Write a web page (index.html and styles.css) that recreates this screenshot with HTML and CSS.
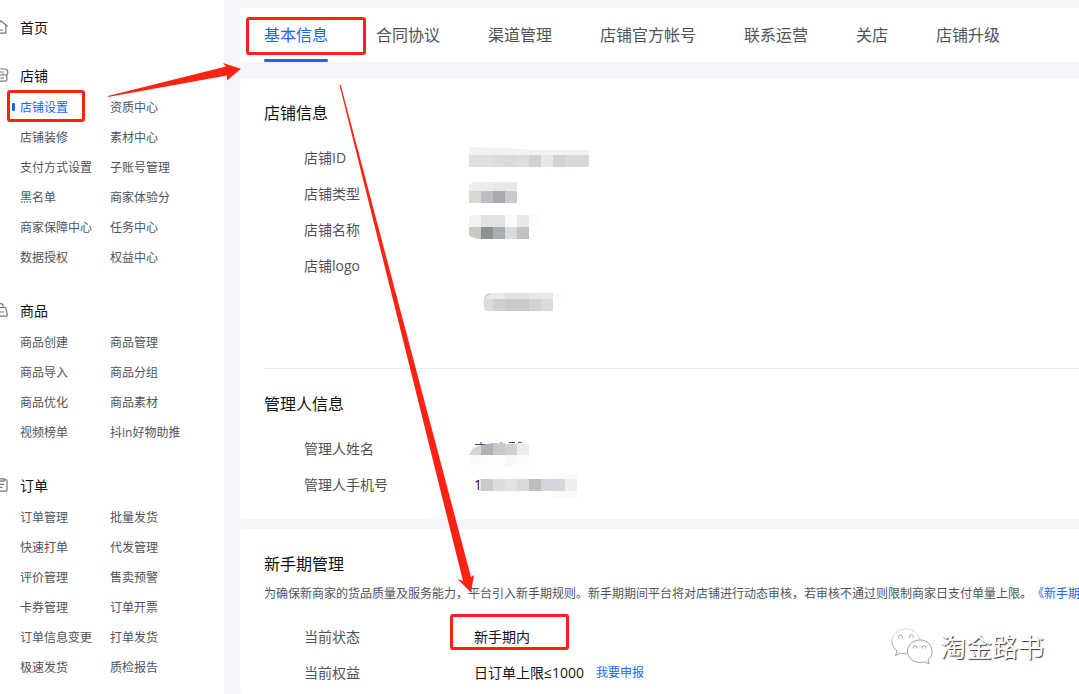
FILE: index.html
```
<!DOCTYPE html>
<html lang="zh-CN">
<head>
<meta charset="utf-8">
<meta name="viewport" content="width=device-width, initial-scale=1">
<title>店铺设置</title>
<link rel="stylesheet" href="styles.css">
</head>
<body>
<div class="app">
  <nav class="sidebar">
    <section class="group">
      <h2 class="group-title"><svg class="group-icon" viewBox="0 0 16 16"><path d="M1.5 7.5 8 1.800l6.500 5.700M3.200 6.500v7.700h9.600V6.500M6 11h4"/></svg><a href="#">首页</a></h2>
    </section>
    <section class="group">
      <h2 class="group-title"><svg class="group-icon" viewBox="0 0 16 16"><path d="M3 2h9c2 0 2.800 2 2.800 3.500 0 1.500-1 2.500-2.800 2.500-1.200 0-2-.6-2.500-1.500M5 5h5.500M3 8h8M13.800 8v5a1.200 1.200 0 0 1-1.200 1.200H2.800M7 11h4"/></svg>店铺</h2>
      <div class="links">
        <a class="active" href="#">店铺设置</a><a href="#">资质中心</a>
        <a href="#">店铺装修</a><a href="#">素材中心</a>
        <a href="#">支付方式设置</a><a href="#">子账号管理</a>
        <a href="#">黑名单</a><a href="#">商家体验分</a>
        <a href="#">商家保障中心</a><a href="#">任务中心</a>
        <a href="#">数据授权</a><a href="#">权益中心</a>
      </div>
    </section>
    <section class="group">
      <h2 class="group-title"><svg class="group-icon" viewBox="0 0 16 16"><path d="M2.500 5.500h10.200l1.600 7.200q.2 1.500-1.300 1.500H1.600M5 5.500V4.300a2.600 2.600 0 0 1 5.200 0v1.200M7 10h4"/></svg>商品</h2>
      <div class="links">
        <a href="#">商品创建</a><a href="#">商品管理</a>
        <a href="#">商品导入</a><a href="#">商品分组</a>
        <a href="#">商品优化</a><a href="#">商品素材</a>
        <a href="#">视频榜单</a><a href="#">抖in好物助推</a>
      </div>
    </section>
    <section class="group">
      <h2 class="group-title"><svg class="group-icon" viewBox="0 0 16 16"><path d="M6 2.800H3.400a1 1 0 0 0-1 1v9.400a1 1 0 0 0 1 1h9.600a1 1 0 0 0 1-1V3.800a1 1 0 0 0-1-1H11M6 1.800h5v2.400H6zM6 7.400h5M6 10.400h3.500"/></svg>订单</h2>
      <div class="links">
        <a href="#">订单管理</a><a href="#">批量发货</a>
        <a href="#">快速打单</a><a href="#">代发管理</a>
        <a href="#">评价管理</a><a href="#">售卖预警</a>
        <a href="#">卡券管理</a><a href="#">订单开票</a>
        <a href="#">订单信息变更</a><a href="#">打单发货</a>
        <a href="#">极速发货</a><a href="#">质检报告</a>
      </div>
    </section>
  </nav>

  <main class="content">
    <div class="card tabs" role="tablist">
      <button class="tab selected" role="tab" aria-selected="true">基本信息</button>
      <button class="tab" role="tab">合同协议</button>
      <button class="tab" role="tab">渠道管理</button>
      <button class="tab" role="tab">店铺官方帐号</button>
      <button class="tab" role="tab">联系运营</button>
      <button class="tab" role="tab">关店</button>
      <button class="tab" role="tab">店铺升级</button>
    </div>

    <div class="card details">
      <section class="panel">
        <h3>店铺信息</h3>
        <dl>
          <div class="row"><dt>店铺ID</dt><dd>
            <svg class="mosaic" viewBox="0 0 130 36">
              <path fill="#f3f2f3" d="M0 7l36 1 30 2h54v5H0z"/>
              <path fill="#e1e0e1" d="M0 15h24v12H0z"/><path fill="#dbdce0" d="M24 15h12v12H24z"/><path fill="#d9dad7" d="M36 15h12v12H36z"/><path fill="#dddce1" d="M48 15h12v12H48z"/><path fill="#d2d1cf" d="M60 15h12v12H60z"/><path fill="#e5e7e9" d="M72 15h12v12H72z"/><path fill="#cdd2d2" d="M84 15h12v12H84z"/><path fill="#d9d7da" d="M96 15h12v12H96z"/><path fill="#d4d9dc" d="M108 15h12v12h-12z"/>
            </svg></dd></div>
          <div class="row"><dt>店铺类型</dt><dd>
            <svg class="mosaic" viewBox="0 0 130 36">
              <path fill="#eeedee" d="M0 15V9q2-3 8-3h16v9z"/><path fill="#e6e7e8" d="M24 6h24v9H24z"/>
              <path fill="#d8d7d2" d="M0 15h12v12H0z"/><path fill="#c2bcc2" d="M12 15h12v12H12z"/><path fill="#a5a9b2" d="M24 15h12v12H24z"/><path fill="#cdcacd" d="M36 15h12v12H36z"/>
            </svg></dd></div>
          <div class="row"><dt>店铺名称</dt><dd>
            <svg class="mosaic" viewBox="0 0 130 36">
              <path fill="#f2f2f1" d="M0 15V5q1-2 4-2h8v12z"/><path fill="#e1e2e4" d="M12 3h24v12H12z"/><path fill="#f9fafa" d="M36 3h12v12H36z"/><path fill="#e8e8e8" d="M48 3h12v12H48z"/><path fill="#fcfcfc" d="M60 3h12v12H60z"/>
              <path fill="#c8c7c0" d="M0 15h12v12Q2 26 0 23z"/><path fill="#8e9191" d="M12 15h12v12H12z"/><path fill="#a9aeb4" d="M24 15h12v12H24z"/><path fill="#d6dbdd" d="M36 15h12v12H36z"/><path fill="#c1c0c0" d="M48 15h12v12H48z"/>
            </svg></dd></div>
          <div class="row logo-row"><dt>店铺logo</dt><dd>
            <svg class="mosaic logo-mosaic" viewBox="0 0 130 72">
              <path fill="#eaeaea" d="M16 51q0-6 6-6h14v6z"/><path fill="#e3e3e3" d="M36 45h24v6H36z"/><path fill="#e8e8e8" d="M60 45h24v6H60z"/><path fill="#fcfcfc" d="M84 45h12v5H84z"/>
              <path fill="#dbdbdb" d="M15 51h9v12h-8q-2-6-1-12z"/><path fill="#cfcfcf" d="M24 51h12v12H24z"/><path fill="#cacaca" d="M36 51h24v12H36z"/><path fill="#d2d2d2" d="M60 51h12v12H60z"/><path fill="#dadada" d="M72 51h12v12H72z"/>
              <path fill="none" stroke="#bbb" d="M16 51q0-5 5-5"/>
            </svg></dd></div>
        </dl>
      </section>
      <section class="panel">
        <h3>管理人信息</h3>
        <dl>
          <div class="row"><dt>管理人姓名</dt><dd>
            <svg class="mosaic" viewBox="0 0 130 36">
              <path fill="none" stroke="#444" d="M6 13.500h12M12 11v4M31 12h2M40 11.500h6M49 12l2-1 2 1"/>
              <path fill="#d9d4d2" d="M0 24q3-8 12-10v10z"/><path fill="#afb3b9" d="M12 14l12-2v12H12z"/><path fill="#c4c9cd" d="M24 12h12v12H24z"/><path fill="#ced0d3" d="M36 13h12v11H36z"/><path fill="#ededee" d="M48 13h12v11H48z"/>
              <path fill="#fafaf9" d="M0 24h12v12H2q-2-2-2-4z"/><path fill="#fcfefd" d="M12 24h24v12H12z"/><path fill="#f9f9f9" d="M36 24h12v12H36z"/><path fill="#fcfcfc" d="M48 24h12v12H48z"/>
            </svg></dd></div>
          <div class="row"><dt>管理人手机号</dt><dd><span class="masked">1</span>
            <svg class="mosaic over-text" viewBox="0 0 130 36">
              <path fill="#fafafa" d="M84 7h24v24H84z"/><path fill="#e9e5e2" d="M10 12h2v12h-2z"/>
              <path fill="#cdcbca" d="M12 12h12v12H12z"/><path fill="#dcdcde" d="M24 12h12v12H24z"/><path fill="#e2e2e3" d="M36 12h12v12H36z"/><path fill="#d9d9d7" d="M48 12h12v12H48z"/><path fill="#bcbfbe" d="M60 12h12v12H60z"/><path fill="#d2d5db" d="M72 12h12v12H72z"/><path fill="#d5d8d8" d="M84 12h12v12H84z"/><path fill="#eee" d="M96 12h12v12H96z"/>
            </svg></dd></div>
        </dl>
      </section>
    </div>

    <div class="card novice">
      <section class="panel">
        <h3>新手期管理</h3>
        <p class="note">为确保新商家的货品质量及服务能力，平台引入新手期规则。新手期期间平台将对店铺进行动态审核，若审核不通过则限制商家日支付单量上限。<a href="#">《新手期</a></p>
        <dl>
          <div class="row"><dt>当前状态</dt><dd><span class="value">新手期内</span></dd></div>
          <div class="row"><dt>当前权益</dt><dd><span class="value">日订单上限≤1000</span><a class="apply" href="#">我要申报</a></dd></div>
        </dl>
      </section>
    </div>
  </main>

  <svg class="marks" width="600" height="694" viewBox="0 0 600 694" aria-hidden="true">
    <g fill="none" stroke="#ff2112" stroke-width="3">
      <rect x="8.500" y="91.500" width="75" height="29" rx="1.500"/>
      <rect x="247.500" y="18.500" width="117" height="35" rx="1.500"/>
      <rect x="451.500" y="615.500" width="116" height="33" rx="1.500"/>
    </g>
    <path fill="#ff2112" d="M108 96 226 66.500 223 63l18 5.700L227 80.500V75.500L108 97z"/>
    <path fill="#ff2112" d="M339.500 85h1.200L471 577l3-2-3 17.500L457.500 579l5.500 2z"/>
  </svg>

  <div class="watermark">
    <svg viewBox="0 0 42 38" aria-hidden="true">
      <g class="shade"><path class="faint" d="M29 12C27 5 22 1 15 1 7 1 1 6.500 1 13.500"/><path d="M1 13.500c0 4 2 7.200 5 9.500l-1.500 4.500 5-2.500c2 .6 4 .9 6.500.8"/><path d="M29 12c-7 0-12.500 5-12.500 11.200S22 34.500 29 34.500c1.500 0 3-.3 4.500-.7l4.500 2-1-3.800c2.500-2 4-5 4-8.300C41 17 36 12 29 12z"/><path d="M8 10.500a2 2 0 1 1 3 0M19 10a2 2 0 1 1 3 0M22.500 20.500a1.800 1.800 0 1 1 3 0M31.500 20.500a1.800 1.800 0 1 1 3 0"/></g>
    </svg>
    <span>淘金路书</span>
  </div>
</div>
</body>
</html>
```
FILE: styles.css
```
* {
  box-sizing: border-box;
}

body {
  margin: 0;
  background: #f5f4fa;
  color: #111;
  font-family: "Open Sans", "Noto Sans CJK SC", sans-serif;
  font-size: 14px;
  font-weight: 400;
  text-spacing-trim: space-all;
}

h2,
h3,
p,
dl,
dd {
  margin: 0;
  font-weight: inherit;
}

a {
  color: inherit;
  text-decoration: none;
}

.app {
  position: relative;
  display: flex;
  gap: 16px;
  min-height: 100vh;
  overflow: hidden;
}

/* Sidebar */
.sidebar {
  flex: 0 0 224px;
  display: flex;
  flex-direction: column;
  gap: 21px;
  padding-top: 11px;
  background: #fff;
}

.group:first-child {
  margin-bottom: -7px;
}

.group-title {
  display: flex;
  align-items: center;
  gap: 11px;
  height: 34px;
  padding-bottom: 2px;
  font-size: 14px;
}

.group-icon {
  width: 16px;
  height: 16px;
  margin-left: -7px;
  fill: none;
  stroke: #777;
  stroke-width: 1.2;
}

.links {
  display: grid;
  grid-template-columns: 90px 1fr;
  padding-left: 20px;
  color: #50535a;
  font-size: 12px;
  line-height: 30px;
}

.links .active {
  position: relative;
  color: #1966ff;
}

.links .active::before {
  content: "";
  position: absolute;
  left: -8px;
  top: 10px;
  width: 3px;
  height: 8px;
  border-radius: 1px;
  background: #1966ff;
}

/* Content */
.content {
  flex: 1;
  min-width: 0;
  display: flex;
  flex-direction: column;
  padding-top: 8px;
}

.card {
  border-radius: 4px 0 0 4px;
  background: #fff;
}

.tabs {
  display: flex;
  gap: 48px;
  height: 54px;
  margin-bottom: 16px;
  padding-left: 24px;
}

.tab {
  flex: none;
  padding: 1px 0 0;
  border: 0;
  border-bottom: 3px solid transparent;
  background: none;
  color: #50535a;
  font: inherit;
  font-size: 16px;
  cursor: pointer;
}

.tab.selected {
  position: relative;
  color: #1966ff;
}

.tab.selected::after {
  content: "";
  position: absolute;
  left: 0;
  right: 0;
  bottom: -3px;
  height: 3px;
  border-radius: 2px;
  background: #1966ff;
}

.details {
  margin-bottom: 10px;
  padding: 0 0 16px 24px;
}

.novice {
  flex: 1;
  padding-left: 24px;
}

.panel {
  padding-top: 24px;
}

.panel + .panel {
  border-top: 1px solid #ebecf0;
}

.panel h3 {
  margin-bottom: 16px;
  font-size: 16px;
  line-height: 22px;
}

.row {
  display: flex;
  min-height: 36px;
  padding-left: 40px;
  line-height: 36px;
}

.row dt {
  flex: 0 0 165px;
  color: #50535a;
}

.row dd {
  position: relative;
  display: flex;
}

.logo-row {
  min-height: 120px;
}

.mosaic {
  display: block;
  width: 130px;
  height: 36px;
}

.logo-mosaic {
  height: 72px;
}

.over-text {
  position: absolute;
  left: 0;
  top: 0;
}

.value,
.masked {
  padding-left: 5px;
}

.novice h3 {
  margin-bottom: 8px;
}

.note {
  margin-bottom: 14px;
  color: #50535a;
  font-size: 12px;
  line-height: 22px;
  white-space: nowrap;
}

.note a,
.apply {
  color: #1966ff;
}

.apply {
  margin-left: 12px;
  font-size: 12px;
}

/* Annotations over the page */
.marks {
  position: absolute;
  left: 0;
  top: 0;
  pointer-events: none;
}

.watermark {
  position: absolute;
  right: 35px;
  bottom: 28px;
  display: flex;
  align-items: center;
  gap: 7px;
  color: #fff;
  font-size: 26px;
  font-weight: 400;
  line-height: 38px;
  text-shadow: 1px 1px 1px #333;
}

.watermark svg {
  width: 42px;
  height: 38px;
}

.shade {
  fill: #fff;
  stroke: #888;
  stroke-width: 0.8;
}

.shade .faint {
  stroke: #ccc;
}
```
